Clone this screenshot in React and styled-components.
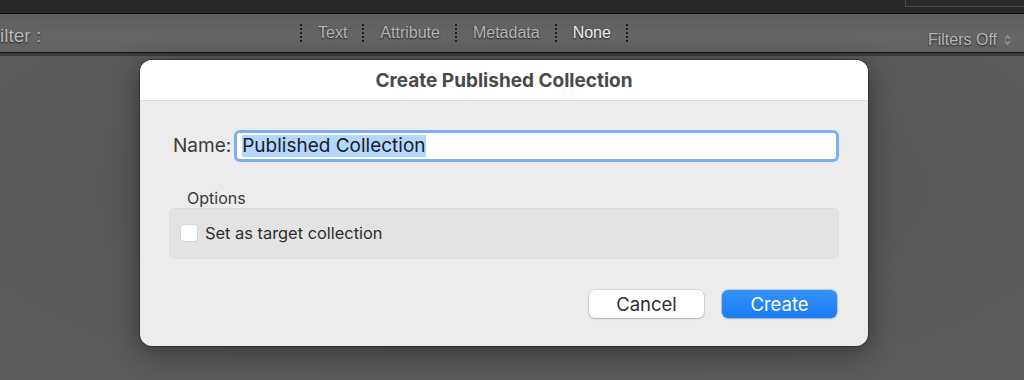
import React from "react";
import styled, { createGlobalStyle } from "styled-components";

const GlobalStyle = createGlobalStyle`
  body {
    margin: 0;
    background: #5a5a5a;
    font-family: "Liberation Sans", Arial, sans-serif;
  }
`;

const Page = styled.div`
  width: 1024px;
  height: 380px;
  overflow: hidden;
  display: flex;
  flex-direction: column;
  background: #5a5a5a;
`;

const TopBar = styled.div`
  height: 13px;
  background: #282828;
  border-bottom: 1px solid #0e0e0e;
  display: flex;
  justify-content: flex-end;
`;

const TopBox = styled.div`
  width: 118px;
  height: 6px;
  border: 1px solid #4a4a4a;
  border-top: none;
  border-right: none;
  background: #2a2a2a;
`;

const FilterBar = styled.div`
  height: 38px;
  background: linear-gradient(#5d5d5d, #666666 60%, #626262);
  border-bottom: 1px solid #141414;
  display: flex;
  align-items: center;
  color: #b8b8b8;
  font-size: 16px;
  text-shadow: 0 1px 2px rgba(0, 0, 0, 0.75);
`;

const FilterLabel = styled.div`
  width: 300px;
  font-size: 19px;
  padding-top: 5px;
`;

const Tabs = styled.div`
  display: flex;
  align-items: center;
  flex: 1;
`;

const Sep = styled.span`
  width: 0;
  height: 18px;
  border-left: 2px dotted #1e1e1e;
`;

const Tab = styled.span`
  padding: 0 15px 0 16px;
  color: ${(p) => (p.$active ? "#ececec" : "#b4b4b4")};
`;

const FiltersOff = styled.div`
  margin-left: auto;
  margin-right: 13px;
  padding-top: 13px;
  display: flex;
  align-items: center;
  gap: 7px;
  color: #b6b6b6;
`;

const Under = styled.div`
  height: 3px;
  background: #3c3c3c;
`;

const Stage = styled.div`
  flex: 1;
  padding: 4px 0 0 140px;
  background: radial-gradient(ellipse at 50% 40%, #505050 0%, #5a5a5a 60%, #5d5d5d 100%);
`;

const Dialog = styled.div`
  width: 728px;
  border-radius: 12px;
  overflow: hidden;
  background: #ececec;
  box-shadow: 0 6px 28px rgba(0, 0, 0, 0.45), 0 0 0 1px rgba(0, 0, 0, 0.25);
  font-family: Inter, "Liberation Sans", sans-serif;
  color: #2e2e2e;
`;

const TitleBar = styled.div`
  height: 40px;
  background: #ffffff;
  border-bottom: 1px solid #dcdcdc;
  display: flex;
  align-items: center;
  justify-content: center;
  font-size: 19px;
  font-weight: 700;
  color: #4a4a4a;
`;

const Body = styled.div`
  padding: 32px 29px 28px 29px;
  display: flex;
  flex-direction: column;
`;

const NameRow = styled.div`
  display: flex;
  align-items: center;
  gap: 6px;
  padding-left: 4px;
  height: 26px;
`;

const Label = styled.label`
  font-size: 19px;
  line-height: 22px;
  color: #3a3a3a;
`;

const Field = styled.div`
  flex: 1;
  height: 26px;
  background: #fff;
  border-radius: 3px;
  box-shadow: 0 0 0 3px #7eaef2;
  display: flex;
  align-items: center;
  padding-left: 5px;
  margin-right: 3px;
  font-size: 19px;
  color: #1c1c1c;
`;

const Selected = styled.span`
  background: #b3d7ff;
  line-height: 22px;
`;

const OptionsTitle = styled.div`
  margin: 30px 0 0 18px;
  font-size: 16px;
  line-height: 19px;
  color: #3a3a3a;
`;

const OptionsBox = styled.div`
  height: 49px;
  box-sizing: content-box;
  background: #e3e3e3;
  border: 1px solid #dddddd;
  border-radius: 6px;
  display: flex;
  align-items: center;
  gap: 8px;
  padding-left: 11px;
  font-size: 16.4px;
  color: #2e2e2e;
`;

const Check = styled.span`
  width: 16px;
  height: 16px;
  margin-bottom: 2px;
  background: #fff;
  border-radius: 3px;
  box-shadow: 0 0 0 1px #d6d6d6, 0 1px 1px rgba(0, 0, 0, 0.08);
`;

const CheckText = styled.span`
  margin-bottom: 2px;
`;

const Buttons = styled.div`
  margin-top: 31px;
  display: flex;
  justify-content: flex-end;
  gap: 18px;
  padding-right: 2px;
`;

const Button = styled.button`
  width: 115px;
  height: 28px;
  padding: 0;
  border: none;
  border-radius: 6px;
  font-family: Inter, "Liberation Sans", sans-serif;
  font-size: 18.5px;
  color: ${(p) => (p.$primary ? "#fff" : "#2e2e2e")};
  background: ${(p) =>
    p.$primary ? "linear-gradient(#3592fa, #1a7cf6)" : "#ffffff"};
  box-shadow: ${(p) =>
    p.$primary
      ? "0 0 0 0.5px rgba(0,80,200,0.4), 0 1px 2px rgba(0,0,0,0.15)"
      : "0 0 0 0.5px rgba(0,0,0,0.15), 0 1px 2px rgba(0,0,0,0.2)"};
`;

const tabs = ["Text", "Attribute", "Metadata", "None"];

export default function App() {
  return (
    <Page>
      <GlobalStyle />
      <TopBar>
        <TopBox />
      </TopBar>
      <FilterBar>
        <FilterLabel>ilter :</FilterLabel>
        <Tabs>
          {tabs.map((t) => (
            <React.Fragment key={t}>
              <Sep />
              <Tab $active={t === "None"}>{t}</Tab>
            </React.Fragment>
          ))}
          <Sep />
        </Tabs>
        <FiltersOff>
          Filters Off
          <svg width="7" height="12" viewBox="0 0 7 12">
            <path d="M1 5 L3.5 2 L6 5 M1 7 L3.5 10 L6 7" fill="none" stroke="#9a9a9a" strokeWidth="1.2" />
          </svg>
        </FiltersOff>
      </FilterBar>
      <Under />
      <Stage>
        <Dialog>
          <TitleBar>Create Published Collection</TitleBar>
          <Body>
            <NameRow>
              <Label>Name:</Label>
              <Field>
                <Selected>Published Collection</Selected>
              </Field>
            </NameRow>
            <OptionsTitle>Options</OptionsTitle>
            <OptionsBox>
              <Check />
              <CheckText>Set as target collection</CheckText>
            </OptionsBox>
            <Buttons>
              <Button>Cancel</Button>
              <Button $primary>Create</Button>
            </Buttons>
          </Body>
        </Dialog>
      </Stage>
    </Page>
  );
}
